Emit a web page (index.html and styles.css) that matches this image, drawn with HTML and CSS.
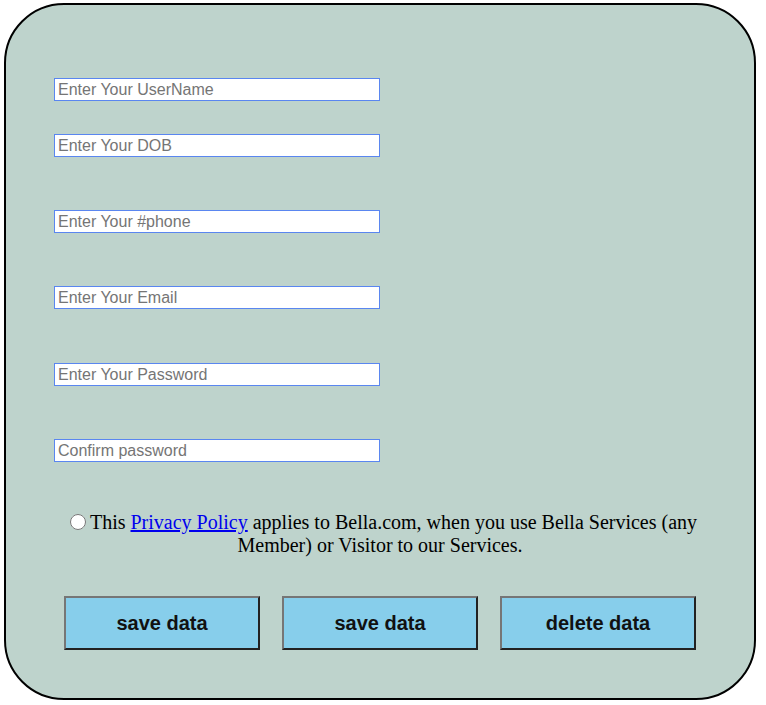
FILE: index.html
```html
<!DOCTYPE html>
<html>
<head>
<meta charset="utf-8">
<link rel="stylesheet" href="styles.css">
</head>
<body>
<form class="card">
  <div class="fields">
    <input class="field f1" type="text" placeholder="Enter Your UserName">
    <input class="field f2" type="text" placeholder="Enter Your DOB">
    <input class="field f3" type="text" placeholder="Enter Your #phone">
    <input class="field f4" type="text" placeholder="Enter Your Email">
    <input class="field f5" type="password" placeholder="Enter Your Password">
    <input class="field f6" type="password" placeholder="Confirm password">
  </div>
  <p class="policy"><input class="radio" type="radio">This <a href="#">Privacy Policy</a> applies to Bella.com, when you use Bella Services (any Member) or Visitor to our Services.</p>
  <div class="actions">
    <button type="button" class="btn">save data</button>
    <button type="button" class="btn">save data</button>
    <button type="button" class="btn">delete data</button>
  </div>
</form>
</body>
</html>
```
FILE: styles.css
```css
html, body {
  margin: 0;
  padding: 0;
  background: #ffffff;
}
body {
  padding: 3px 0 0 4px;
  font-family: "Liberation Serif", "Times New Roman", serif;
}
.card {
  box-sizing: border-box;
  width: 752px;
  height: 697px;
  background: #bed3cc;
  border: 2px solid #000;
  border-radius: 60px;
  padding: 73px 48px 0 48px;
  display: flex;
  flex-direction: column;
}
.fields {
  display: flex;
  flex-direction: column;
  align-items: flex-start;
}
.field {
  box-sizing: border-box;
  width: 326px;
  height: 23px;
  margin: 0;
  padding: 0 3px;
  border: 1px solid #5a86f0;
  background: #fff;
  font-family: "Liberation Sans", Arial, sans-serif;
  font-size: 16px;
  outline: none;
}
.field::placeholder {
  color: #757575;
}
.f2 { margin-top: 33px; }
.f3 { margin-top: 53px; }
.f4 { margin-top: 53px; }
.f5 { margin-top: 54px; }
.f6 { margin-top: 53px; }
.policy {
  margin: 49px 0 0 0;
  padding: 0 2px;
  text-align: center;
  font-size: 20px;
  line-height: 23px;
  color: #000;
}
.policy a {
  color: #0000ee;
  text-decoration: underline;
}
.radio {
  width: 16px;
  height: 16px;
  margin: 0 4px 0 7px;
  vertical-align: -1px;
}
.actions {
  margin-top: 39px;
  display: flex;
  justify-content: center;
  gap: 22px;
}
.btn {
  box-sizing: border-box;
  width: 196px;
  height: 54px;
  background: #87ceeb;
  border: 2px solid;
  border-color: #767676 #222222 #222222 #767676;
  font-family: "Liberation Sans", Arial, sans-serif;
  font-weight: bold;
  font-size: 20px;
  color: #111;
  padding: 0;
}
```
